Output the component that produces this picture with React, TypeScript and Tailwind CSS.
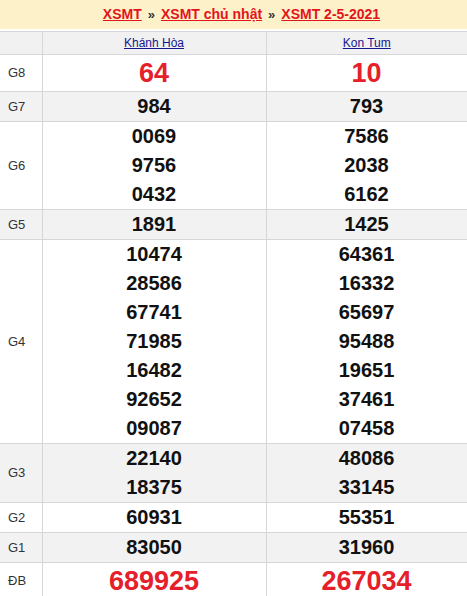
const rows: { label: string; a: string[]; b: string[]; red?: boolean }[] = [
	{ label: "G8", a: ["64"], b: ["10"], red: true },
	{ label: "G7", a: ["984"], b: ["793"] },
	{ label: "G6", a: ["0069", "9756", "0432"], b: ["7586", "2038", "6162"] },
	{ label: "G5", a: ["1891"], b: ["1425"] },
	{
		label: "G4",
		a: ["10474", "28586", "67741", "71985", "16482", "92652", "09087"],
		b: ["64361", "16332", "65697", "95488", "19651", "37461", "07458"],
	},
	{ label: "G3", a: ["22140", "18375"], b: ["48086", "33145"] },
	{ label: "G2", a: ["60931"], b: ["55351"] },
	{ label: "G1", a: ["83050"], b: ["31960"] },
	{ label: "ĐB", a: ["689925"], b: ["267034"], red: true },
];

function Nums({ items, red }: { items: string[]; red?: boolean }) {
	return (
		<td className="border border-[#d6d6d6] p-0 text-center align-middle">
			{items.map((n) => (
				<div
					key={n}
					className={
						red
							? "text-[27px] leading-[36px] font-bold text-[#e5202a]"
							: "text-[20px] leading-[29px] font-bold text-[#111]"
					}
				>
					{n}
				</div>
			))}
		</td>
	);
}

export default function App() {
	return (
		<div className="w-[467px] bg-white font-['Liberation_Sans',Arial,sans-serif]">
			<div className="h-[29px] bg-[#fdf1c9] flex items-center justify-center pl-[16px] text-[14px] font-bold">
				<a className="text-[#e3141b] underline">XSMT</a>
				<span className="text-[#333] mx-[6px] text-[13px]">»</span>
				<a className="text-[#e3141b] underline">XSMT chủ nhật</a>
				<span className="text-[#333] mx-[6px] text-[13px]">»</span>
				<a className="text-[#e3141b] underline">XSMT 2-5-2021</a>
			</div>
			<table className="mt-[2px] w-[467px] border-collapse table-fixed">
				<colgroup>
					<col className="w-[42px]" />
					<col className="w-[224px]" />
					<col className="w-[201px]" />
				</colgroup>
				<thead>
					<tr className="bg-[#f1f1f1] h-[23px]">
						<th className="border border-[#d6d6d6] border-l-0"></th>
						<th className="border border-[#d6d6d6] text-[12px] font-normal text-center">
							<a className="text-[#16168f] underline">Khánh Hòa</a>
						</th>
						<th className="border border-[#d6d6d6] border-r-0 text-[12px] font-normal text-center">
							<a className="text-[#16168f] underline">Kon Tum</a>
						</th>
					</tr>
				</thead>
				<tbody>
					{rows.map((r, i) => (
						<tr key={r.label} className={i % 2 === 1 ? "bg-[#f2f2f2]" : "bg-white"}>
							<td className="border border-[#d6d6d6] border-l-0 text-[13px] text-[#333] pl-[8px] align-middle">
								{r.label}
							</td>
							<Nums items={r.a} red={r.red} />
							<Nums items={r.b} red={r.red} />
						</tr>
					))}
				</tbody>
			</table>
		</div>
	);
}
